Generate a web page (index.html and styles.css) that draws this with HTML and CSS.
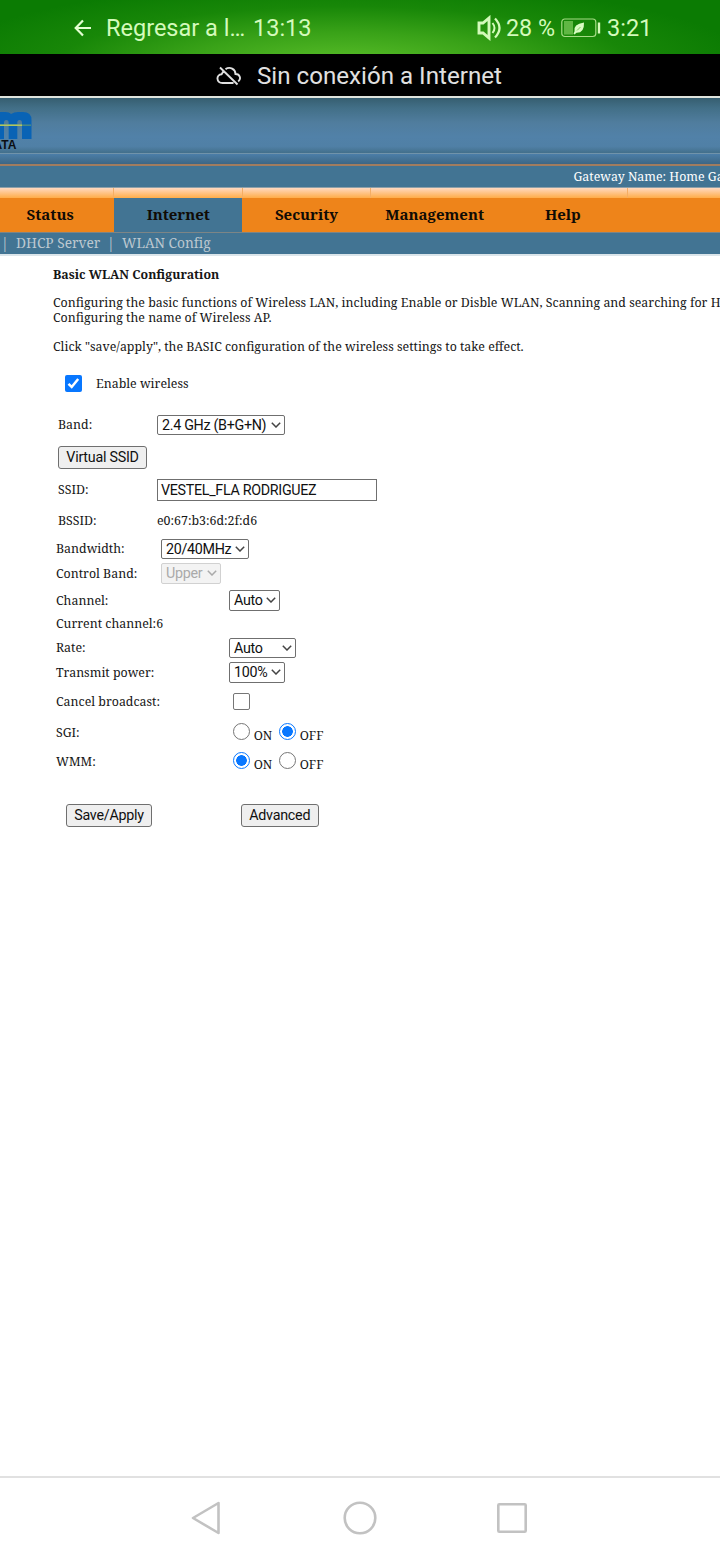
FILE: index.html
```html
<!DOCTYPE html>
<html lang="es">
<head>
<meta charset="utf-8">
<title>Basic WLAN Configuration</title>
<link rel="stylesheet" href="styles.css">
</head>
<body>
<div class="screen">
  <div class="status">
    <svg class="back" width="18" height="18" viewBox="0 0 18 18"><path d="M9 1.500 1.700 9 9 16.500M1.700 9H17" fill="none" stroke="#e4ffd2" stroke-width="2.200"/></svg>
    <span class="return">Regresar a l…</span>
    <span class="clock">13:13</span>
    <svg class="sound" width="26" height="26" viewBox="0 0 26 26" fill="none" stroke="#d4fabb"><path d="M3 8h4L13 3v20L7 18H3z" stroke-width="2.900"/><path d="M16.500 8q4 5 0 10" stroke-width="2"/><path d="M19 3.500q9 9.500 0 19" stroke-width="2.200"/></svg>
    <span class="percent">28 %</span>
    <svg class="battery" width="40" height="20" viewBox="0 0 40 20"><rect x=".8" y="1" width="34" height="17.500" rx="3" fill="none" stroke="#a6dc86" stroke-width="1.200"/><rect x="3" y="3" width="9" height="13.500" fill="#60b744"/><path d="M13.500 13.500Q12 6 23 4.500 23.500 15 15.500 14.800L13.500 16.500 12.500 15.500z" fill="#d8fbc2"/><path d="M16 12.500 19.500 9" stroke="#3ba020" stroke-width=".6"/><rect x="36.800" y="4.500" width="2.400" height="11" fill="#d4fabb"/></svg>
    <span class="time">3:21</span>
  </div>
  <div class="offline">
    <svg width="26" height="20" viewBox="0 0 26 20" fill="none" stroke="#e0e0e0" stroke-width="1.900"><path d="M9.500 3.100C14 .2 19.400 3 19.500 8c4.500 0 6 5 2.700 7.500M17.500 17H6.500C.2 17-.3 8.600 5.700 8.200L7.500 5M4 1.500 21.500 18.500"/></svg>
    <span>Sin conexión a Internet</span>
  </div>
  <header class="banner">
    <svg width="36" height="30" viewBox="0 0 36 30"><path d="M-2 2H5q4.500 0 6 2Q14 2 18 2h5q8.500 0 8.500 8v19H22V13q0-3-2.400-3t-2.300 3v16H8.700V13q0-3-2.400-3T4 13v16h-6z" fill="#0963b5"/><path d="M0 15.200H31" stroke="#4b8b83" stroke-width="1.500"/><path d="M0 15.200H22" stroke="#c5d35a" stroke-width="1.300"/></svg>
    <span class="data">ATA</span>
  </header>
  <div class="band"></div>
  <div class="gateway"><span>Gateway Name: Home Ga</span></div>
  <div class="gloss"><i></i><i></i><i></i><i class="plain"></i><i></i></div>
  <nav class="tabs"><a>Status</a><a class="on">Internet</a><a>Security</a><a>Management</a><a>Help</a></nav>
  <nav class="subnav"><i>|</i><span class="s1">DHCP Server</span><i>|</i><span class="s2">WLAN Config</span></nav>
  <main>
    <h1>Basic WLAN Configuration</h1>
    <p>Configuring the basic functions of Wireless LAN, including Enable or Disble WLAN, Scanning and searching for H<br>Configuring the name of Wireless AP.</p>
    <p>Click "save/apply", the BASIC configuration of the wireless settings to take effect.</p>
    <form>
      <div class="row enable"><b class="check full"><svg width="17" height="17" viewBox="0 0 17 17"><path d="m3.500 8.800 3.200 3.200 6.500-8" fill="none" stroke="#fff" stroke-width="2.500"/></svg></b><span>Enable wireless</span></div>
      <div class="row band-row"><label>Band:</label><div class="select w128"><span>2.4 GHz (B+G+N)</span><svg viewBox="0 0 10 6"><path d="m.8.8 4.200 4.200L9.200.8"/></svg></div></div>
      <div class="row virtual"><div class="button w89">Virtual SSID</div></div>
      <div class="row ssid"><label>SSID:</label><div class="input">VESTEL_FLA RODRIGUEZ</div></div>
      <div class="row bssid"><label>BSSID:</label><span>e0:67:b3:6d:2f:d6</span></div>
      <div class="row near bandwidth"><label>Bandwidth:</label><div class="select w88"><span>20/40MHz</span><svg viewBox="0 0 10 6"><path d="m.8.8 4.200 4.200L9.200.8"/></svg></div></div>
      <div class="row near control"><label>Control Band:</label><div class="select off w60"><span>Upper</span><svg viewBox="0 0 10 6"><path d="m.8.8 4.200 4.200L9.200.8"/></svg></div></div>
      <div class="row far channel"><label>Channel:</label><div class="select tall w51"><span>Auto</span><svg viewBox="0 0 10 6"><path d="m.8.8 4.200 4.200L9.200.8"/></svg></div></div>
      <div class="row far current"><span>Current channel:6</span></div>
      <div class="row far rate"><label>Rate:</label><div class="select w67"><span>Auto</span><svg viewBox="0 0 10 6"><path d="m.8.8 4.200 4.200L9.200.8"/></svg></div></div>
      <div class="row far power"><label>Transmit power:</label><div class="select tall w56"><span>100%</span><svg viewBox="0 0 10 6"><path d="m.8.8 4.200 4.200L9.200.8"/></svg></div></div>
      <div class="row far cancel"><label>Cancel broadcast:</label><b class="check"></b></div>
      <div class="row far sgi"><label>SGI:</label><b class="radio"></b><span class="opt">ON</span><b class="radio full"></b><span class="opt">OFF</span></div>
      <div class="row far wmm"><label>WMM:</label><b class="radio full"></b><span class="opt">ON</span><b class="radio"></b><span class="opt">OFF</span></div>
      <div class="row actions"><div class="button w86">Save/Apply</div><div class="button w77">Advanced</div></div>
    </form>
  </main>
  <footer>
    <svg width="32" height="36" viewBox="0 0 32 36"><path d="M28.500 3v30L3 18z" stroke-linejoin="round"/></svg>
    <svg width="36" height="36" viewBox="0 0 36 36"><circle cx="18" cy="18" r="15.300"/></svg>
    <svg width="32" height="36" viewBox="0 0 32 36"><rect x="2.300" y="4.300" width="27.400" height="27.400" rx="1"/></svg>
  </footer>
</div>
</body>
</html>
```
FILE: styles.css
```css
* { box-sizing: border-box; }
body { margin: 0; background: #fff; }
.screen { width: 720px; height: 1560px; overflow: hidden; display: flex; flex-direction: column; font-family: "Noto Serif", "Droid Serif", "DejaVu Serif Condensed", "Liberation Serif", serif; font-size: 12.385px; color: #161616; white-space: nowrap; }
.screen > * { flex: none; }
svg { flex: none; display: block; }
i, b { font-style: normal; font-weight: 400; }
.status { height: 54px; display: flex; align-items: center; padding: 2px 0 0 74px; background: radial-gradient(ellipse 340px 70px at 345px 66px, #5cc02a 0, #39a218 48%, #188708 85%, #0b7b03 120%); font: 23.500px Roboto, sans-serif; color: #d4fabb; }
.return { margin-left: 14px; width: 147px; }
.clock { width: 223px; }
.percent { margin-left: 4px; width: 55px; font-size: 23.300px; }
.time { margin-left: 6px; }
.offline { height: 44px; border-bottom: 2px solid #dfe3dd; background: #000; display: flex; align-items: center; padding: 2px 0 0 216px; gap: 15px; font: 24.150px Roboto, sans-serif; color: #e0e0e0; }
.banner { height: 56px; padding-top: 12px; background: linear-gradient(#365e70, #426f87 18%, #507d9e 45%, #5181a8 70%, #5080a6 88%, #426f8b); border-bottom: 1px solid #7093aa; }
.data { display: block; margin: -1px 0 0 -6.500px; font: bold 12px/12px "Liberation Sans", sans-serif; color: #0b0e12; }
.band { height: 12px; background: linear-gradient(#4b7ea8, #3d6684); border-bottom: 2px solid #a17c5f; }
.gateway { height: 22px; padding-left: 573.500px; background: #427493; border-bottom: 1px solid #8ea0a7; line-height: 21px; color: #fff; }
.gloss { height: 10px; display: flex; background: linear-gradient(#ffd9c1, #ffad48); margin-left: -14px; }
.gloss i { width: 128.400px; border-right: 1px solid #f5ae64; }
.gloss .plain { border: 0; }
.tabs { height: 35px; display: flex; margin-left: -14px; background: #ee841a; border-bottom: 1px solid #7c8586; font-size: 15px; font-weight: bold; line-height: 33px; color: #100b05; }
.tabs a { width: 128.200px; text-align: center; }
.tabs .on { background: #427493; }
.subnav { height: 23px; background: #427493; border-bottom: 2px solid #dbe5ea; color: #bcc8d0; font-size: 13.750px; line-height: 20px; display: flex; padding-left: 1px; }
.subnav i { width: 15px; }
.subnav .s1 { width: 91px; }
.subnav .s2 { letter-spacing: -.02px; }
main { height: 1220px; padding-left: 53px; }
h1 { margin: 0; font-size: 12.370px; line-height: 15px; padding: 11px 0 13px; }
p { margin: 0 0 14px; line-height: 15px; }
.row { display: flex; align-items: center; height: 22px; padding-left: 5px; }
.near, .far { padding-left: 3px; }
label { width: 99px; }
.near label { width: 105px; }
.far label { width: 173px; }
.enable { margin-top: 18px; padding-left: 12px; gap: 14px; }
.band-row { margin-top: 19px; }
.virtual { margin-top: 10px; }
.ssid { margin-top: 11px; }
.bssid { margin-top: 9px; }
.bandwidth { margin-top: 6px; }
.control { margin-top: 3px; }
.channel { margin-top: 5px; }
.current { margin-top: 1px; }
.rate { margin-top: 2px; }
.power { margin-top: 3px; }
.cancel { margin-top: 7px; }
.sgi { margin-top: 9px; }
.wmm { margin-top: 7px; }
.actions { margin-top: 31px; padding-left: 13px; gap: 89px; }
.select, .input, .button { display: flex; align-items: center; border: 1px solid #6f6f6f; border-radius: 2px; font: 14.300px Roboto, sans-serif; letter-spacing: -.31px; color: #101010; }
.select { height: 20px; margin-top: 2px; padding: 0 3px 0 4px; justify-content: space-between; }
.select svg { width: 10px; height: 6px; fill: none; stroke: #444; stroke-width: 1.500; }
.select.tall, .select.off { height: 21px; margin-top: 0; }
.off { background: #f3f3f3; border-color: #d1d1d1; color: #aaa; }
.off svg { stroke: #aaa; }
.input { width: 220px; height: 22px; margin-top: 2px; padding-left: 3px; border-radius: 0; }
.button { height: 23px; margin-top: 2px; justify-content: center; background: #efefef; border-radius: 3px; letter-spacing: -.25px; }
.w128 { width: 128px; } .w88 { width: 88px; } .w60 { width: 60px; } .w51 { width: 51px; }
.w67 { width: 67px; } .w56 { width: 56px; } .w89 { width: 89px; } .w86 { width: 86px; } .w77 { width: 77.500px; }
.check { width: 17px; height: 17px; border: 1px solid #767676; border-radius: 2px; }
.check.full { border: 0; background: #0877ff; }
.cancel .check { margin-left: 4px; }
.radio { width: 17px; height: 17px; border: 1px solid #767676; border-radius: 50%; margin-top: -2px; }
label + .radio { margin-left: 4.400px; }
.radio.full { border-color: #0877ff; background: radial-gradient(circle, #0877ff 5px, #fff 5.600px); }
.opt { padding-top: 6px; width: 26px; margin-left: 3.300px; }
.opt + .radio { margin-left: -.3px; }
footer { height: 84px; margin-top: auto; border-top: 2px solid #e1e1e1; display: flex; align-items: center; padding: 0 0 2px 190px; }
footer svg { fill: none; stroke: #c2c2c2; stroke-width: 2.600; margin-right: 120px; }
footer svg:nth-child(2) { margin-right: 118px; }
```
